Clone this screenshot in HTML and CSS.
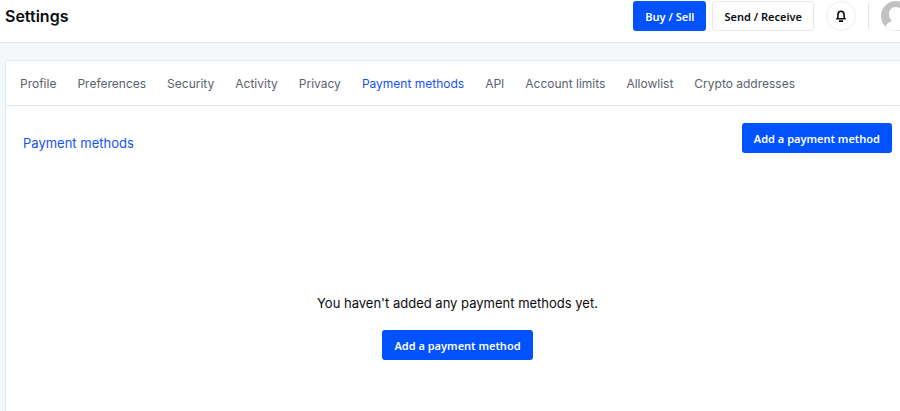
FILE: index.html
```html
<!DOCTYPE html>
<html lang="en">
<head>
<meta charset="utf-8">
<title>Settings</title>
<link rel="stylesheet" href="styles.css">
</head>
<body>
<header class="topbar">
  <h1 class="title">Settings</h1>
  <div class="actions">
    <button class="btn btn-primary" type="button">Buy / Sell</button>
    <button class="btn btn-outline" type="button">Send / Receive</button>
    <button class="bell" type="button" aria-label="Notifications">
      <svg width="12" height="12" viewBox="0 0 12 12" fill="none" stroke="#0a0b0d" stroke-width="1.6"><path d="M1.2 8.7h9.6M2.5 8.5C3 7.4 3 6.3 3 4.5C3 2.4 4.1 1.2 6 1.2S9 2.4 9 4.5C9 6.3 9 7.4 9.5 8.5M4 11.1h4"/></svg>
    </button>
    <span class="divider"></span>
    <a class="avatar" href="#" aria-label="Account">
      <svg width="30" height="30" viewBox="0 0 30 30"><circle cx="15" cy="15" r="15" fill="#c1c1c1"/><path d="M15 6c4.5 0 7 3 7 7 0 3-1 5-3 7 3 1 6 2 7.5 4.5A15 15 0 0 1 5 26c0-3 3-5 6-6-2-2-3-4-3-7 0-4 2.5-7 7-7z" fill="#fff"/></svg>
    </a>
  </div>
</header>
<main class="card">
  <nav class="tabs">
    <a href="#">Profile</a>
    <a href="#">Preferences</a>
    <a href="#">Security</a>
    <a href="#">Activity</a>
    <a href="#">Privacy</a>
    <a href="#" class="active" aria-current="page">Payment methods</a>
    <a href="#">API</a>
    <a href="#">Account limits</a>
    <a href="#">Allowlist</a>
    <a href="#">Crypto addresses</a>
  </nav>
  <div class="section-head">
    <h2 class="section-title">Payment methods</h2>
    <button class="btn btn-primary" type="button">Add a payment method</button>
  </div>
  <div class="empty">
    <p class="empty-text">You haven't added any payment methods yet.</p>
    <button class="btn btn-primary" type="button">Add a payment method</button>
  </div>
</main>
</body>
</html>
```
FILE: styles.css
```css
* { box-sizing: border-box; }
html { overflow: hidden; }
body {
  margin: 0;
  min-height: 100vh;
  display: flex;
  flex-direction: column;
  background: #f5f8fb;
  color: #0a0b0d;
  font-family: Inter, "Liberation Sans", sans-serif;
  overflow: hidden;
}
h1, h2, p { margin: 0; }
a { text-decoration: none; }
.topbar {
  display: flex;
  justify-content: space-between;
  align-items: flex-start;
  margin-right: -11px;
  padding: 1px 0 11px 5px;
  background: #fff;
  border-bottom: 1px solid #e1e4e8;
}
.title { font-size: 16px; line-height: 30px; font-weight: 600; }
.actions { display: flex; align-items: center; }
.btn {
  height: 30px;
  padding: 1px 11px 0;
  border: 1px solid transparent;
  border-radius: 3px;
  font: 600 11px/27px "Noto Sans", "Open Sans", sans-serif;
  white-space: nowrap;
}
.btn-primary { background: #0052ff; color: #fff; }
.btn-outline { background: #fff; border-color: #e6eaee; color: #0a0b0d; margin-left: 6px; }
.bell {
  display: grid;
  place-items: center;
  width: 30px;
  height: 30px;
  margin-left: 12px;
  padding: 0;
  background: #fff;
  border: 1px solid #e8ebee;
  border-radius: 50%;
}
.divider { width: 1px; height: 26px; margin: 0 12px; background: #e1e4e8; }
.avatar, .avatar svg { display: block; }
.card {
  flex: 1;
  display: flex;
  flex-direction: column;
  margin: 17px -10px 0 5px;
  background: #fff;
  border: 1px solid #e1e7ee;
  border-bottom: 0;
  border-radius: 3px 0 0 0;
}
.tabs {
  display: flex;
  gap: 21px;
  padding: 1px 14px 0;
  border-bottom: 1px solid #e3e7ec;
  font-size: 12px;
  line-height: 43px;
  white-space: nowrap;
}
.tabs a { color: #5b616e; }
.tabs .active { color: #1652f0; }
.section-head {
  display: flex;
  justify-content: space-between;
  padding: 17px 17px 0;
}
.section-title { padding-top: 10px; font-size: 13px; line-height: 20px; font-weight: 400; color: #1652f0; }
.empty { padding: 140px 0 50px; text-align: center; }
.empty-text { margin-bottom: 17px; font-size: 13px; line-height: 20px; }
```
